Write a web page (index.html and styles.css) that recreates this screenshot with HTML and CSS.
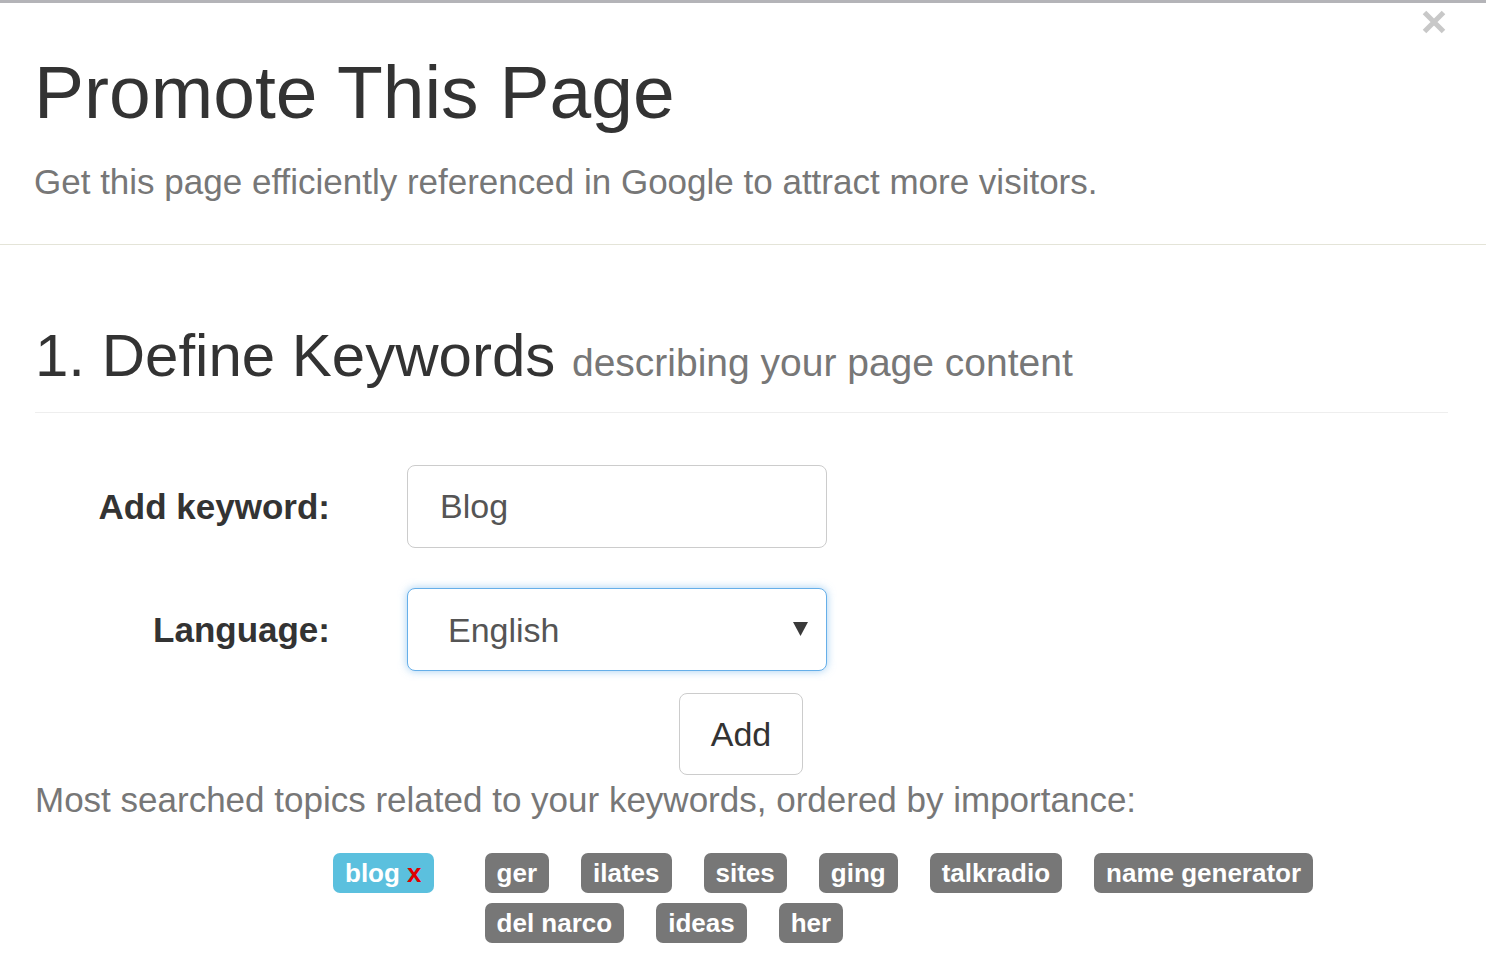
FILE: index.html
```html
<!DOCTYPE html>
<html lang="en">
<head>
<meta charset="utf-8">
<title>Promote This Page</title>
<link rel="stylesheet" href="styles.css">
</head>
<body>
<div class="modal">
  <button class="close" type="button" aria-label="Close">
    <svg width="24" height="24" viewBox="0 0 24 24"><path d="M2.5 2.5 L21.5 21.5 M21.5 2.5 L2.5 21.5" stroke="#c8c8c8" stroke-width="5" fill="none"/></svg>
  </button>
  <div class="modal-header">
    <h1 class="title">Promote This Page</h1>
    <p class="lead">Get this page efficiently referenced in Google to attract more visitors.</p>
  </div>
  <div class="modal-body">
    <h2 class="section-title">1. Define Keywords <small>describing your page content</small></h2>
    <form class="kw-form">
      <label class="form-label" for="kw">Add keyword:</label>
      <input class="form-control" id="kw" type="text" value="Blog">
      <label class="form-label" for="lang">Language:</label>
      <div class="select-wrap">
        <select class="form-control form-select" id="lang"><option>English</option></select>
        <svg class="caret" width="15" height="14" viewBox="0 0 15 14"><path d="M0 0 H15 L7.5 14 Z" fill="#3a3a3a"/></svg>
      </div>
      <button class="btn" type="button">Add</button>
    </form>
    <p class="topics-intro">Most searched topics related to your keywords, ordered by importance:</p>
    <div class="tags">
      <span class="tag tag-active">blog <span class="tag-x">x</span></span>
      <div class="tag-list">
        <span class="tag">ger</span>
        <span class="tag">ilates</span>
        <span class="tag">sites</span>
        <span class="tag">ging</span>
        <span class="tag">talkradio</span>
        <span class="tag">name generator</span>
        <span class="tag">del narco</span>
        <span class="tag">ideas</span>
        <span class="tag">her</span>
      </div>
    </div>
  </div>
</div>
</body>
</html>
```
FILE: styles.css
```css
* { box-sizing: border-box; }
html, body { margin: 0; padding: 0; background: #fff; }
body {
  font-family: "Liberation Sans", Arial, sans-serif;
  color: #333;
  width: 1486px;
  height: 970px;
  overflow: hidden;
}
.modal {
  position: relative;
  border-top: 3px solid #b4b4b8;
  min-height: 967px;
}
.close {
  position: absolute;
  top: 7px;
  right: 40px;
  width: 24px;
  height: 24px;
  padding: 0;
  border: 0;
  background: none;
  line-height: 0;
  cursor: pointer;
}
.modal-header {
  padding: 48px 38px 37px 34px;
  border-bottom: 1px solid #e4e4d8;
}
.title {
  margin: 0;
  font-size: 75px;
  line-height: 82px;
  font-weight: 400;
  color: #333;
}
.lead {
  margin: 24px 0 0;
  font-size: 35px;
  line-height: 50px;
  color: #777;
}
.modal-body {
  padding: 0 38px 0 35px;
}
.section-title {
  margin: 78px 0 0;
  padding-bottom: 16px;
  border-bottom: 1px solid #eee;
  font-size: 60px;
  line-height: 66px;
  font-weight: 400;
  color: #333;
}
.section-title small {
  font-size: 39px;
  color: #777;
}
.kw-form {
  margin-top: 52px;
  display: grid;
  grid-template-columns: 295px 420px;
  column-gap: 77px;
  row-gap: 40px;
  align-items: center;
}
.form-label {
  text-align: right;
  font-weight: 700;
  font-size: 35px;
  color: #333;
}
.form-control {
  display: block;
  width: 420px;
  height: 83px;
  margin: 0;
  border: 1px solid #ccc;
  border-radius: 8px;
  background: #fff;
  font-family: inherit;
  font-size: 34px;
  color: #555;
  padding: 0 32px;
  outline: none;
}
.select-wrap {
  position: relative;
}
.form-select {
  appearance: none;
  -webkit-appearance: none;
  padding: 0 40px;
  border-color: #66afe9;
  box-shadow: 0 0 8px rgba(102, 175, 233, 0.6);
}
.caret {
  position: absolute;
  top: 34px;
  right: 19px;
  pointer-events: none;
}
.btn {
  grid-column: 2;
  margin: -18px 0 0 272px;
  width: 124px;
  height: 82px;
  border: 1px solid #ccc;
  border-radius: 8px;
  background: #fff;
  font-family: inherit;
  font-size: 34px;
  color: #333;
  padding: 0;
}
.topics-intro {
  margin: 0;
  font-size: 35px;
  line-height: 50px;
  color: #777;
}
.tags {
  margin-top: 28px;
  padding-left: 298px;
  display: flex;
  align-items: flex-start;
  gap: 51px;
}
.tag-list {
  flex: 1;
  display: flex;
  flex-wrap: wrap;
  gap: 10px 32px;
}
.tag {
  display: inline-flex;
  align-items: center;
  height: 40px;
  padding: 0 12px;
  border-radius: 7px;
  background: #777;
  color: #fff;
  font-weight: 700;
  font-size: 26px;
  white-space: pre;
}
.tag-active {
  background: #5bc0de;
  flex: none;
}
.tag-x {
  color: #e00000;
}
```
